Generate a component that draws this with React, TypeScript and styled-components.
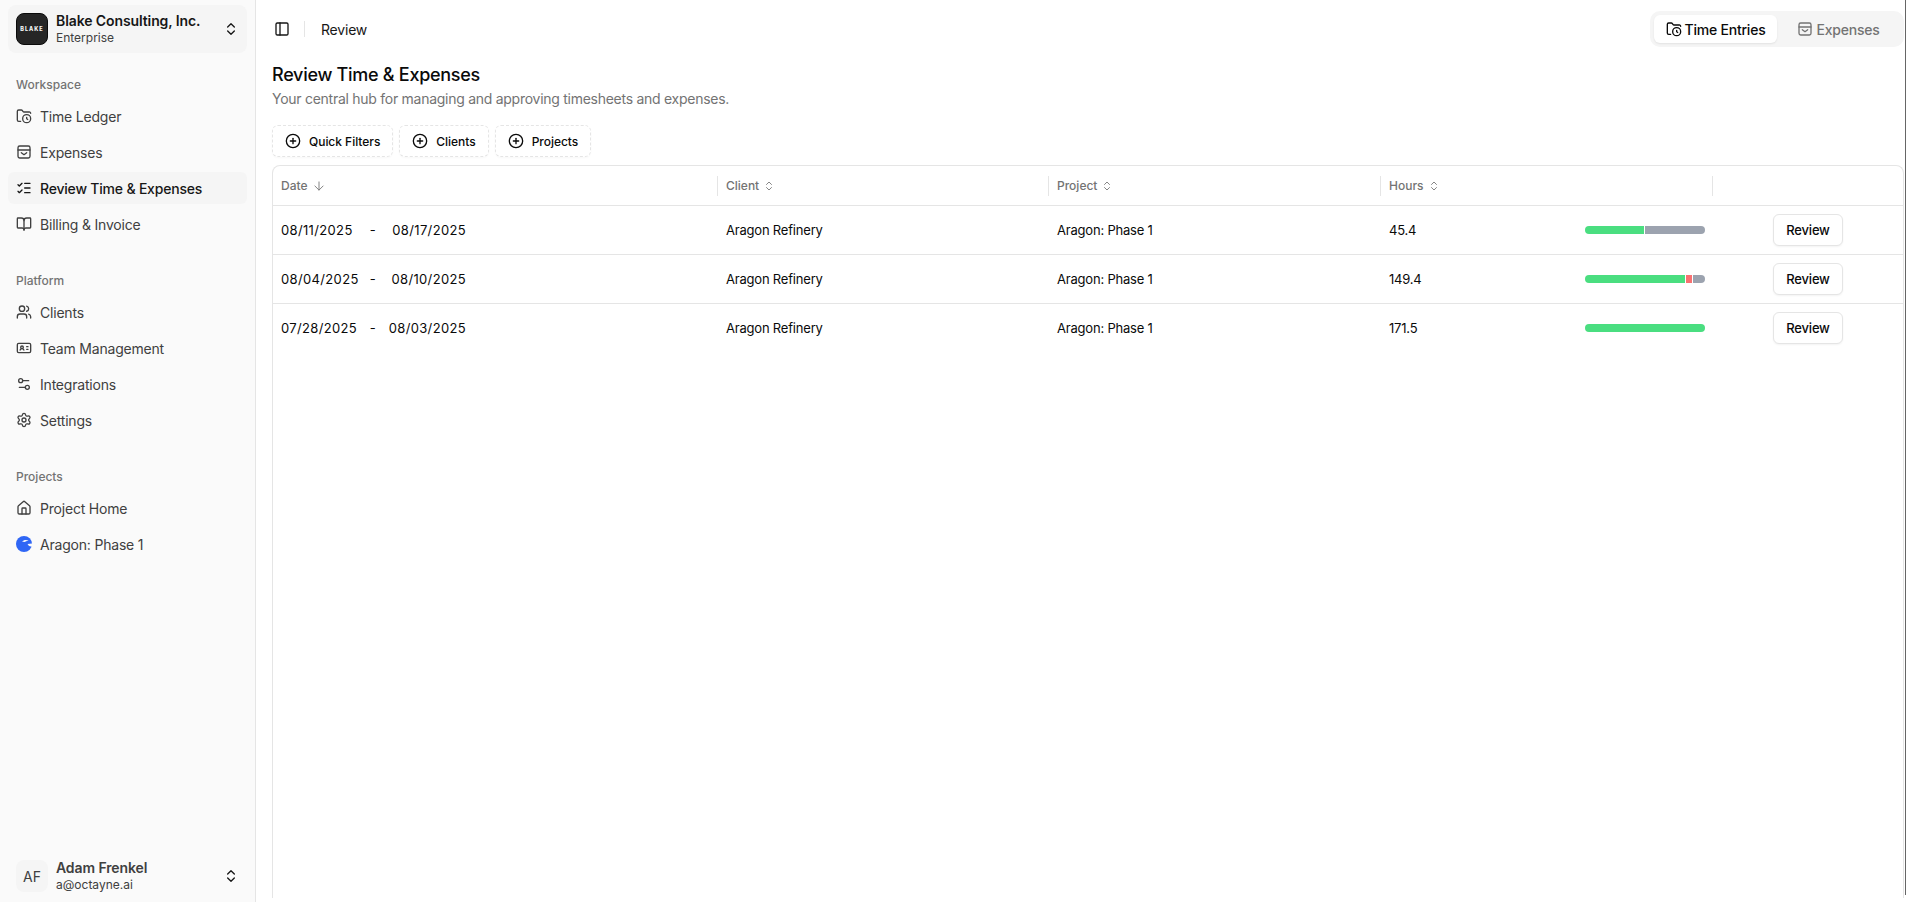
import React from 'react';
import type { FunctionComponent, ReactNode } from 'react';
import styled, { createGlobalStyle } from 'styled-components';
import {
  ArrowDown,
  BookOpen,
  ChevronsUpDown,
  CirclePlus,
  FolderClock,
  House,
  IdCard,
  ListChecks,
  PanelLeft,
  Settings,
  Settings2,
  Users,
} from 'lucide-react';

const GlobalStyle = createGlobalStyle`
  html, body {
    margin: 0;
    height: 100%;
    background: #fff;
    overflow: hidden;
  }
  body {
    font-family: Inter, "Liberation Sans", sans-serif;
    color: #0a0a0a;
  }
`;

const Shell = styled.div`
  display: flex;
  height: 902px;
  width: 1911px;
`;

const Sidebar = styled.aside`
  width: 256px;
  box-sizing: border-box;
  flex-shrink: 0;
  display: flex;
  flex-direction: column;
  background: #fafafa;
  border-right: 1px solid #e5e5e5;
  padding: 5px 8px 2px;
`;

const Switcher = styled.div`
  display: flex;
  align-items: center;
  height: 48px;
  flex-shrink: 0;
  padding: 0 8px;
  border-radius: 8px;
  background: ${(p: { $plain?: boolean }) => (p.$plain ? 'transparent' : '#f5f5f5')};
  color: #171717;
`;

const Logo = styled.div`
  width: 32px;
  height: 32px;
  flex-shrink: 0;
  border-radius: 8px;
  background: #262626;
  border: 1px solid #0a0a0a;
  box-sizing: border-box;
  display: flex;
  align-items: center;
  justify-content: center;
  color: #f5f5f5;
  font-size: 5.5px;
  font-weight: 800;
  letter-spacing: 1px;
`;

const Avatar = styled.div`
  width: 32px;
  height: 32px;
  flex-shrink: 0;
  border-radius: 8px;
  background: #f5f5f5;
  display: flex;
  align-items: center;
  justify-content: center;
  font-size: 14px;
  color: #404040;
`;

const SwitcherText = styled.div`
  flex: 1;
  margin-left: 8px;
  display: flex;
  flex-direction: column;
  min-width: 0;
`;

const SwitcherName = styled.span`
  font-size: 14px;
  line-height: 17px;
  font-weight: 600;
  letter-spacing: -0.1px;
  color: ${(p: { $muted?: boolean }) => (p.$muted ? '#404040' : '#171717')};
`;

const SwitcherSub = styled.span`
  font-size: 12px;
  line-height: 17px;
  color: #404040;
`;

const NavGroup = styled.nav`
  display: flex;
  flex-direction: column;
  gap: 4px;
  margin-top: ${(p: { $top: number }) => p.$top}px;
`;

const GroupLabel = styled.div`
  height: 24px;
  display: flex;
  align-items: center;
  padding: 0 8px;
  font-size: 12px;
  font-weight: 500;
  color: #737373;
`;

const NavItem = styled.div<{ $active?: boolean }>`
  display: flex;
  align-items: center;
  gap: 8px;
  height: 32px;
  padding: 0 8px;
  border-radius: 6px;
  font-size: 14px;
  letter-spacing: -0.2px;
  color: ${(p) => (p.$active ? '#171717' : '#404040')};
  font-weight: ${(p) => (p.$active ? 500 : 400)};
  background: ${(p) => (p.$active ? '#f5f5f5' : 'transparent')};
  svg {
    flex-shrink: 0;
  }
`;

const Spacer = styled.div`
  flex: 1;
`;

const Main = styled.main`
  flex: 1;
  min-width: 0;
  display: flex;
  flex-direction: column;
`;

const WindowEdge = styled.div`
  width: 1px;
  height: 895px;
  flex-shrink: 0;
  margin-right: 5px;
  background: #666;
`;

const TopBar = styled.header`
  height: 48px;
  flex-shrink: 0;
  display: flex;
  align-items: center;
  padding: 10px 1px 0 18px;
  box-sizing: border-box;
`;

const TopDivider = styled.span`
  width: 1px;
  height: 16px;
  background: #e5e5e5;
  margin: 0 16px 0 14px;
`;

const Crumb = styled.span`
  flex: 1;
  font-size: 14px;
  letter-spacing: -0.2px;
  color: #171717;
`;

const Tabs = styled.div`
  display: grid;
  grid-template-columns: 123px 123px;
  align-items: center;
  height: 36px;
  padding: 4px;
  box-sizing: border-box;
  border-radius: 10px;
  background: #f5f5f5;
`;

const Tab = styled.div<{ $active?: boolean }>`
  display: flex;
  align-items: center;
  justify-content: center;
  gap: 3px;
  height: 28px;
  border-radius: 6px;
  font-size: 14px;
  font-weight: 500;
  letter-spacing: -0.22px;
  color: ${(p) => (p.$active ? '#0a0a0a' : '#737373')};
  background: ${(p) => (p.$active ? '#fff' : 'transparent')};
  box-shadow: ${(p) => (p.$active ? '0 1px 2px rgba(0,0,0,.08)' : 'none')};
`;

const Content = styled.div`
  flex: 1;
  min-height: 0;
  display: flex;
  flex-direction: column;
  padding: 13px 1px 4px 16px;
`;

const Title = styled.h1`
  margin: 0;
  font-size: 18px;
  line-height: 28px;
  font-weight: 500;
  letter-spacing: -0.28px;
  color: #0a0a0a;
`;

const Subtitle = styled.p`
  margin: 0;
  font-size: 14px;
  line-height: 20px;
  letter-spacing: -0.27px;
  color: #737373;
`;

const Filters = styled.div`
  display: flex;
  gap: 6px;
  margin-top: 16px;
`;

const FilterButton = styled.div`
  display: flex;
  align-items: center;
  gap: 8px;
  height: 32px;
  padding: 0 12px;
  box-sizing: border-box;
  border: 1px dashed #e5e5e5;
  border-radius: 6px;
  font-size: 12px;
  font-weight: 500;
  letter-spacing: -0.03px;
  color: #0a0a0a;
  box-shadow: 0 1px 2px rgba(0, 0, 0, 0.03);
`;

const TableFrame = styled.div`
  flex: 1;
  margin-top: 8px;
  border: 1px solid #e5e5e5;
  border-bottom: 0;
  border-radius: 8px 8px 0 0;
`;

const gridColumns = 'grid-template-columns: 445px 331px 332px 332px 1fr;';

const HeaderRow = styled.div`
  display: grid;
  ${gridColumns}
  height: 40px;
  box-sizing: border-box;
  border-bottom: 1px solid #e5e5e5;
`;

const HeaderCell = styled.div<{ $divider?: boolean }>`
  display: flex;
  align-items: center;
  gap: 4px;
  padding-left: 8px;
  font-size: 12px;
  font-weight: 500;
  color: #737373;
  position: relative;
  &::after {
    content: '';
    display: ${(p) => (p.$divider ? 'block' : 'none')};
    position: absolute;
    right: 0;
    top: 10px;
    height: 20px;
    width: 1px;
    background: #e5e5e5;
  }
`;

const Row = styled.div`
  display: grid;
  ${gridColumns}
  height: 49px;
  box-sizing: border-box;
  border-bottom: 1px solid #e5e5e5;
  align-items: center;
  &:last-child {
    border-bottom-color: transparent;
  }
`;

const Cell = styled.div`
  display: flex;
  align-items: center;
  justify-content: space-between;
  padding: 0 8px;
  font-size: 13px;
  letter-spacing: -0.2px;
  color: #0a0a0a;
  min-width: 0;
`;

const DateRange = styled.div`
  display: grid;
  grid-template-columns: 84px 16px 85px;
  width: 185px;
  letter-spacing: 0.35px;
  align-items: center;
`;

const DateEnd = styled.span`
  text-align: right;
`;

const Dash = styled.span`
  text-align: center;
`;

const Usage = styled.div`
  display: flex;
  gap: 1px;
  width: 120px;
  height: 8px;
  border-radius: 4px;
  overflow: hidden;
`;

const UsagePart = styled.span`
  height: 100%;
  background: ${(p: { $tone: string }) => p.$tone};
`;

const ActionCell = styled.div`
  display: flex;
  padding-left: 60px;
`;

const ReviewButton = styled.div`
  display: flex;
  align-items: center;
  justify-content: center;
  width: 70px;
  height: 32px;
  box-sizing: border-box;
  border: 1px solid #e5e5e5;
  border-radius: 6px;
  background: #fff;
  font-size: 13px;
  font-weight: 500;
  letter-spacing: -0.2px;
  box-shadow: 0 1px 2px rgba(0, 0, 0, 0.05);
`;

const ReceiptIcon: FunctionComponent<{ size: number }> = ({ size }) => (
  <svg width={size} height={size} viewBox="0 0 24 24" fill="none" stroke="currentColor" strokeWidth="2" strokeLinecap="round" strokeLinejoin="round">
    <rect x="3" y="3" width="18" height="18" rx="2.5" />
    <path d="M3 9h18" />
    <path d="M8 13l4 3 4-3" />
  </svg>
);

const ProjectLogo: FunctionComponent = () => (
  <svg width="16" height="16" viewBox="0 0 16 16">
    <circle cx="8" cy="8" r="8" fill="#2f66f5" />
    <path d="M6 5.6c1.8-2 4.8-2 6.6-.7-1.6-.1-3 .2-4.2 1.2z" fill="#fafafa" />
    <path d="M11.5 8l4.5-.4v3.2l-3-.8z" fill="#fafafa" />
  </svg>
);

const SidebarLink: FunctionComponent<{ icon: ReactNode; label: string; active?: boolean }> = ({ icon, label, active }) => (
  <NavItem $active={active}>
    {icon}
    {label}
  </NavItem>
);

const rows = [
  { start: '08/11/2025', end: '08/17/2025', hours: '45.4', parts: [['#4ade80', 49.6], ['#9ca3af', 50.4]] },
  { start: '08/04/2025', end: '08/10/2025', hours: '149.4', parts: [['#4ade80', 85], ['#f87171', 4.6], ['#9ca3af', 10.4]] },
  { start: '07/28/2025', end: '08/03/2025', hours: '171.5', parts: [['#4ade80', 100]] },
] as { start: string; end: string; hours: string; parts: [string, number][] }[];

const SortIcon = <ChevronsUpDown size={12} strokeWidth={1.75} color="#737373" />;

const App: FunctionComponent = () => {
  return (
    <>
      <GlobalStyle />
      <Shell>
        <Sidebar>
          <Switcher>
            <Logo>BLAKE</Logo>
            <SwitcherText>
              <SwitcherName>Blake Consulting, Inc.</SwitcherName>
              <SwitcherSub>Enterprise</SwitcherSub>
            </SwitcherText>
            <ChevronsUpDown size={16} />
          </Switcher>
          <NavGroup $top={19}>
            <GroupLabel>Workspace</GroupLabel>
            <SidebarLink icon={<FolderClock size={16} />} label="Time Ledger" />
            <SidebarLink icon={<ReceiptIcon size={16} />} label="Expenses" />
            <SidebarLink icon={<ListChecks size={16} />} label="Review Time &amp; Expenses" active />
            <SidebarLink icon={<BookOpen size={16} />} label="Billing &amp; Invoice" />
          </NavGroup>
          <NavGroup $top={28}>
            <GroupLabel>Platform</GroupLabel>
            <SidebarLink icon={<Users size={16} />} label="Clients" />
            <SidebarLink icon={<IdCard size={16} />} label="Team Management" />
            <SidebarLink icon={<Settings2 size={16} />} label="Integrations" />
            <SidebarLink icon={<Settings size={16} />} label="Settings" />
          </NavGroup>
          <NavGroup $top={28}>
            <GroupLabel>Projects</GroupLabel>
            <SidebarLink icon={<House size={16} />} label="Project Home" />
            <SidebarLink icon={<ProjectLogo />} label="Aragon: Phase 1" />
          </NavGroup>
          <Spacer />
          <Switcher $plain>
            <Avatar>AF</Avatar>
            <SwitcherText>
              <SwitcherName $muted>Adam Frenkel</SwitcherName>
              <SwitcherSub>a@octayne.ai</SwitcherSub>
            </SwitcherText>
            <ChevronsUpDown size={16} />
          </Switcher>
        </Sidebar>
        <Main>
          <TopBar>
            <PanelLeft size={16} color="#171717" />
            <TopDivider />
            <Crumb>Review</Crumb>
            <Tabs>
              <Tab $active>
                <FolderClock size={16} />
                Time Entries
              </Tab>
              <Tab>
                <ReceiptIcon size={16} />
                Expenses
              </Tab>
            </Tabs>
          </TopBar>
          <Content>
            <Title>Review Time &amp; Expenses</Title>
            <Subtitle>Your central hub for managing and approving timesheets and expenses.</Subtitle>
            <Filters>
              {['Quick Filters', 'Clients', 'Projects'].map((label) => (
                <FilterButton key={label}>
                  <CirclePlus size={16} />
                  {label}
                </FilterButton>
              ))}
            </Filters>
            <TableFrame>
              <HeaderRow>
                <HeaderCell $divider>
                  Date
                  <ArrowDown size={14} strokeWidth={1.5} color="#737373" />
                </HeaderCell>
                <HeaderCell $divider>Client{SortIcon}</HeaderCell>
                <HeaderCell $divider>Project{SortIcon}</HeaderCell>
                <HeaderCell $divider>Hours{SortIcon}</HeaderCell>
                <HeaderCell />
              </HeaderRow>
              {rows.map((row) => (
                <Row key={row.start}>
                  <Cell>
                    <DateRange>
                      <span>{row.start}</span>
                      <Dash>-</Dash>
                      <DateEnd>{row.end}</DateEnd>
                    </DateRange>
                  </Cell>
                  <Cell>Aragon Refinery</Cell>
                  <Cell>Aragon: Phase 1</Cell>
                  <Cell>
                    {row.hours}
                    <Usage>
                      {row.parts.map(([tone, share]) => (
                        <UsagePart key={tone} $tone={tone} style={{ width: `${share}%` }} />
                      ))}
                    </Usage>
                  </Cell>
                  <ActionCell>
                    <ReviewButton>Review</ReviewButton>
                  </ActionCell>
                </Row>
              ))}
            </TableFrame>
          </Content>
        </Main>
        <WindowEdge />
      </Shell>
    </>
  );
};

export default App;
